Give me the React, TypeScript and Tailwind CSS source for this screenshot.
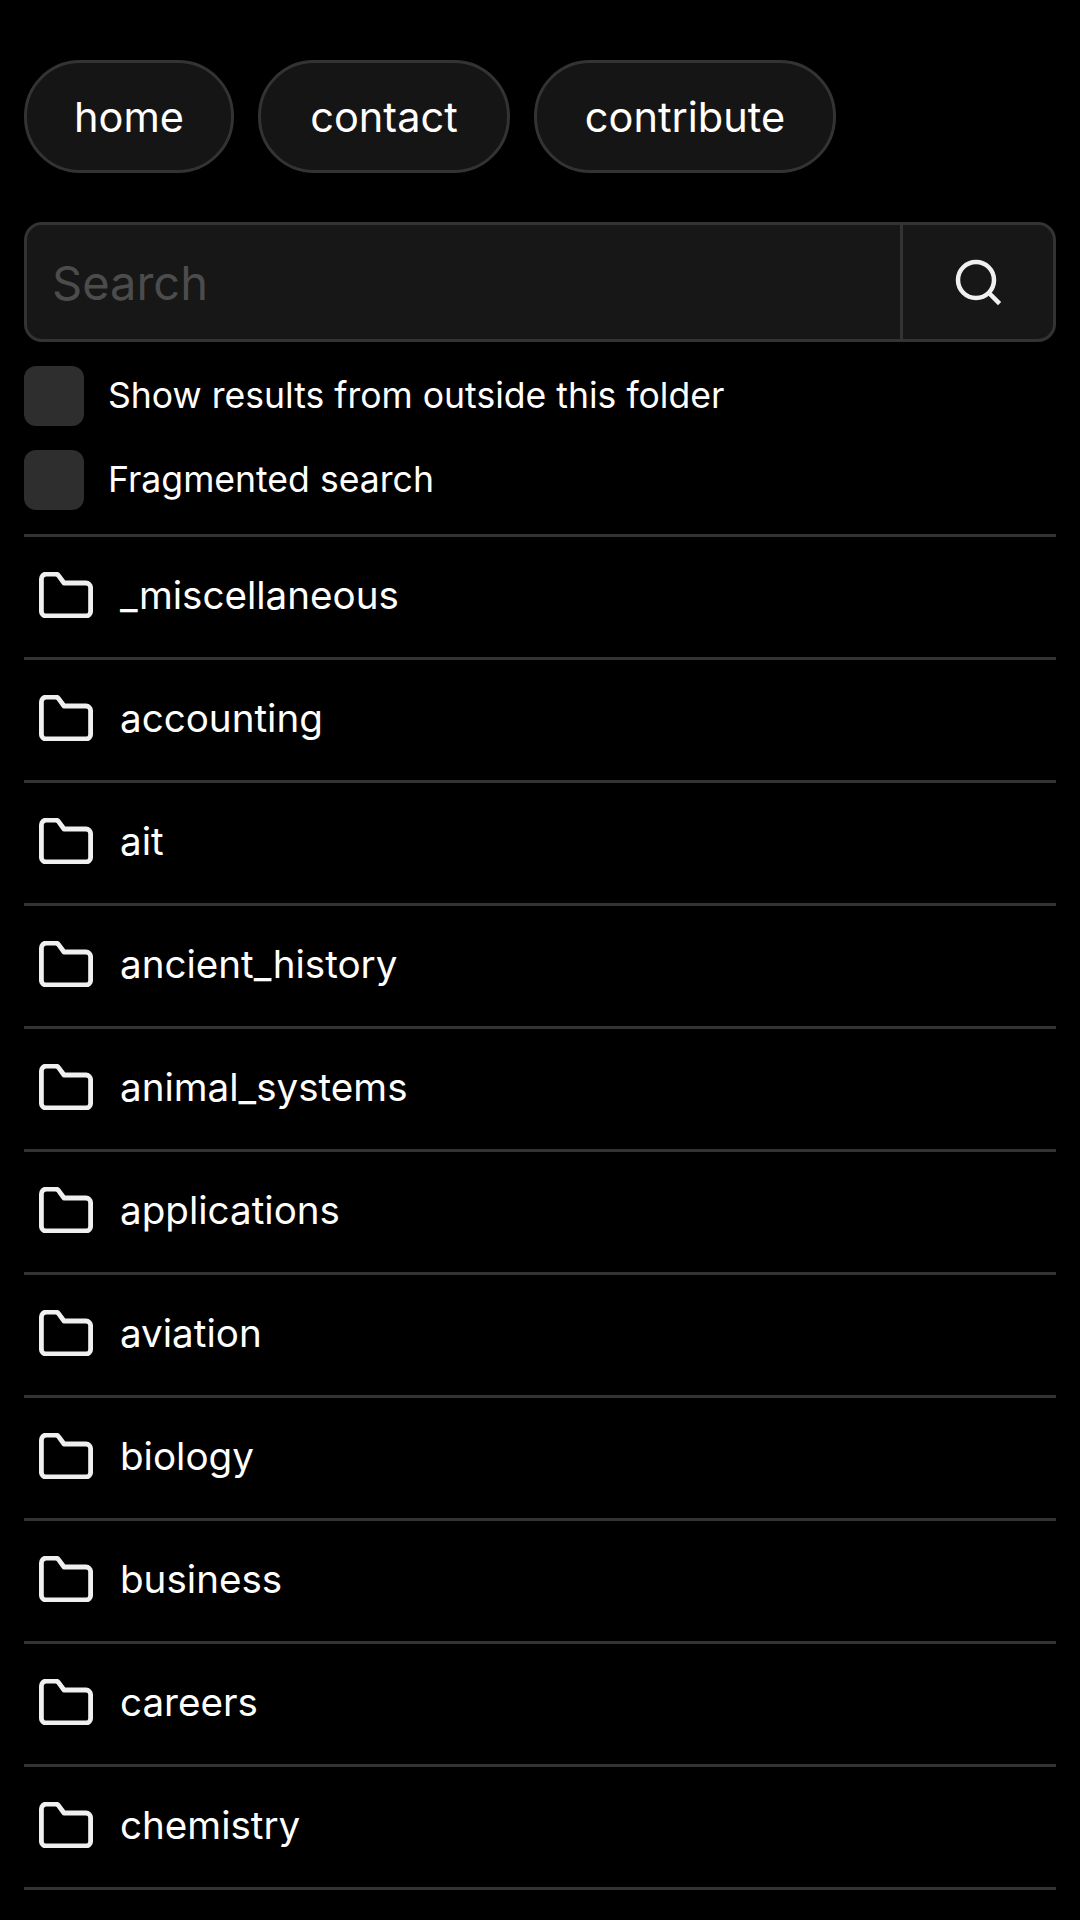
const FOLDERS = ['_miscellaneous', 'accounting', 'ait', 'ancient_history', 'animal_systems', 'applications', 'aviation', 'biology', 'business', 'careers', 'chemistry']
const NAV = [
  { label: 'home', width: 'w-[210px]' },
  { label: 'contact', width: 'w-[252px]' },
  { label: 'contribute', width: 'w-[302px]' },
]
const OPTIONS = ['Show results from outside this folder', 'Fragmented search']

function FolderIcon() {
  return (
    <svg width="54" height="46" viewBox="0 0 54 46" fill="none" stroke="#f0f0f0" strokeWidth="4.8" strokeLinejoin="round" className="shrink-0 mb-[4px]">
      <path d="M2.4 7a5 5 0 0 1 5-5h9a4 4 0 0 1 3.2 1.6L25 11h22a4.6 4.6 0 0 1 4.6 4.6v23.8a4.6 4.6 0 0 1-4.6 4.6H7a4.6 4.6 0 0 1-4.6-4.6z" />
    </svg>
  )
}

export default function App() {
  return (
    <div className="h-[1920px] overflow-hidden bg-black px-6 pt-[60px] text-white font-['Inter',sans-serif]">
      {/* nav */}
      <div className="flex gap-6">
        {NAV.map(n => (
          <div key={n.label} className={`${n.width} h-[113px] flex items-center justify-center pt-[2px] rounded-[56px] border-[3px] border-[#333] bg-[#151515] text-[41.5px]`}>
            {n.label}
          </div>
        ))}
      </div>

      {/* search */}
      <div className="mt-[49px] flex h-[120px] rounded-[18px] border-[3px] border-[#333] bg-[#171717]">
        <div className="flex-1 flex items-center pl-[25px] pt-[2px] text-[47px] text-[#4c4c4c]">Search</div>
        <div className="w-[153px] flex items-center justify-center border-l-[3px] border-[#333]">
          <svg width="48" height="48" viewBox="0 0 48 48" fill="none" stroke="#f0f0f0" strokeWidth="4.5" strokeLinecap="square">
            <circle cx="22" cy="22" r="18" />
            <path d="M36 36l8 8" />
          </svg>
        </div>
      </div>

      {/* options */}
      <div className="mt-6 flex flex-col gap-6">
        {OPTIONS.map(o => (
          <div key={o} className="flex items-center gap-6">
            <span className="w-[60px] h-[60px] rounded-[12px] bg-[#2e2e2e]" />
            <span className="pb-[1px] text-[35.6px]">{o}</span>
          </div>
        ))}
      </div>

      {/* folder list */}
      <div className="mt-6 border-t-[3px] border-[#333]">
        {FOLDERS.map(f => (
          <div key={f} className="h-[123px] flex items-center gap-[27px] pl-[15px] border-b-[3px] border-[#333]">
            <FolderIcon />
            <span className="pb-[2px] text-[38.6px]">{f}</span>
          </div>
        ))}
      </div>
    </div>
  )
}
